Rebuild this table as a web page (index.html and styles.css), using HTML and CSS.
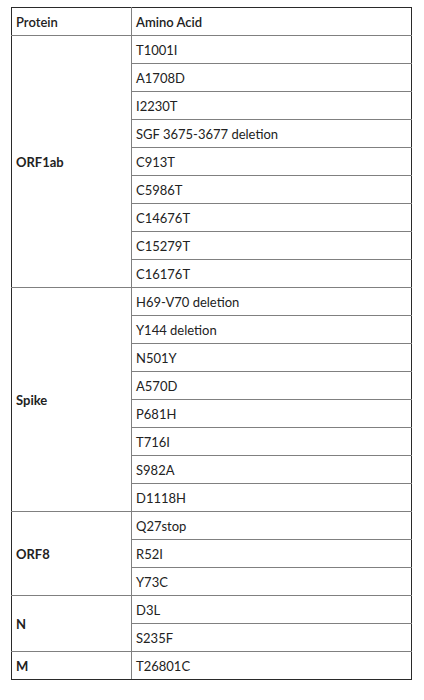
FILE: index.html
```html
<!DOCTYPE html>
<html>
<head>
<meta charset="utf-8">
<link rel="stylesheet" href="styles.css">
</head>
<body>
<table class="mut">
<thead>
<tr><th class="c1">Protein</th><th class="c2">Amino Acid</th></tr>
</thead>
<tbody>
<tr><td class="prot" rowspan="9">ORF1ab</td><td>T1001I</td></tr>
<tr><td>A1708D</td></tr>
<tr><td>I2230T</td></tr>
<tr><td>SGF 3675-3677 deletion</td></tr>
<tr><td>C913T</td></tr>
<tr><td>C5986T</td></tr>
<tr><td>C14676T</td></tr>
<tr><td>C15279T</td></tr>
<tr><td>C16176T</td></tr>
<tr><td class="prot" rowspan="8">Spike</td><td>H69-V70 deletion</td></tr>
<tr><td>Y144 deletion</td></tr>
<tr><td>N501Y</td></tr>
<tr><td>A570D</td></tr>
<tr><td>P681H</td></tr>
<tr><td>T716I</td></tr>
<tr><td>S982A</td></tr>
<tr><td>D1118H</td></tr>
<tr><td class="prot" rowspan="3">ORF8</td><td>Q27stop</td></tr>
<tr><td>R52I</td></tr>
<tr><td>Y73C</td></tr>
<tr><td class="prot" rowspan="2">N</td><td>D3L</td></tr>
<tr><td>S235F</td></tr>
<tr><td class="prot">M</td><td>T26801C</td></tr>
</tbody>
</table>
</body>
</html>
```
FILE: styles.css
```css
html, body {
  margin: 0;
  padding: 0;
  background: #fff;
}
body {
  padding: 7px 0 0 11px;
  font-family: Lato, "Liberation Sans", sans-serif;
  color: #222;
  font-size: 13px;
}
.mut {
  border-collapse: collapse;
  width: 401px;
  border: 1px solid #2a2a2a;
}
.mut th, .mut td {
  border: 1px solid #808080;
  height: 28px;
  padding: 0 4px;
  box-sizing: border-box;
  text-align: left;
  vertical-align: middle;
  line-height: 16px;
}
.mut th {
  font-weight: 600;
}
.mut .c1 {
  width: 120px;
}
.mut .prot {
  font-weight: 700;
}
.mut tr > :first-child { border-left: 1px solid #2a2a2a; }
.mut tr > :last-child { border-right: 1px solid #2a2a2a; }
.mut thead th { border-top: 1px solid #2a2a2a; }
.mut tbody tr:last-child td { border-bottom: 1px solid #2a2a2a; }
.mut tbody tr td.prot { border-left: 1px solid #2a2a2a; border-right: 1px solid #808080; }
```
